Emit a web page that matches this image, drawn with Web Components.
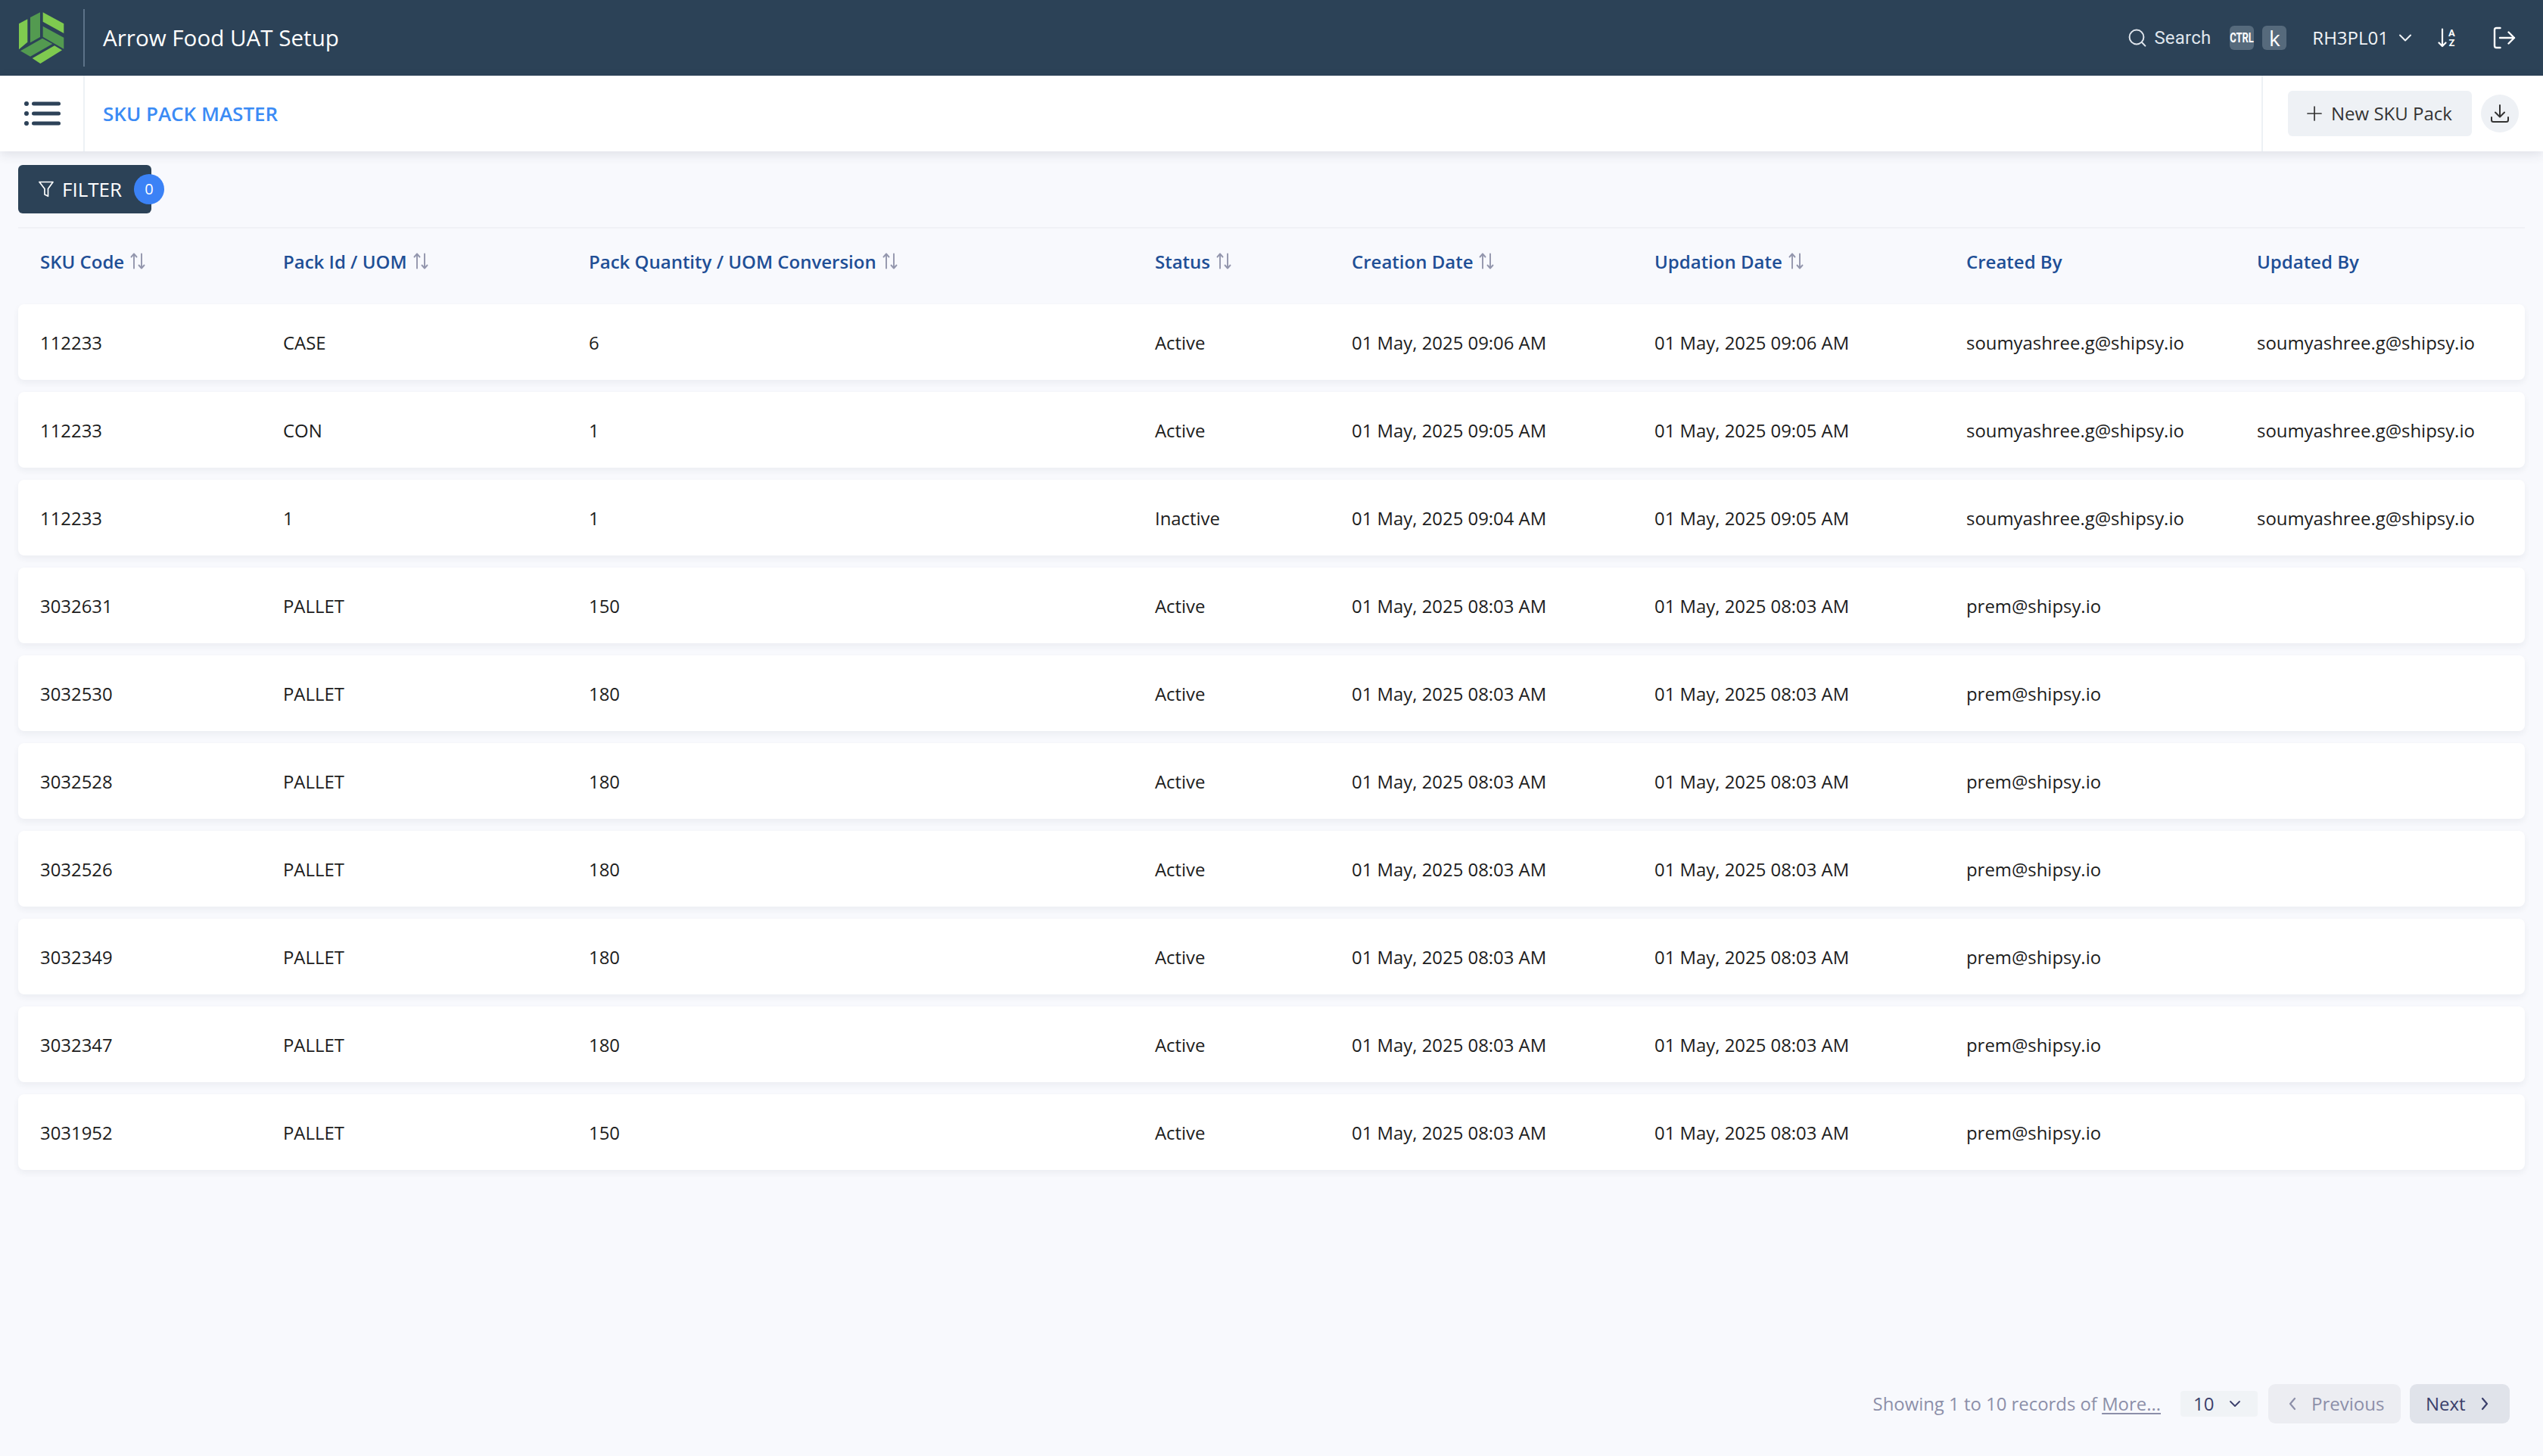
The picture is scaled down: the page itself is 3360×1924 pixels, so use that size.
<!DOCTYPE html>
<html lang="en">
<head>
<meta charset="utf-8">
<title>SKU Pack Master</title>
<style>
html,body{margin:0;padding:0;height:100%;background:#f8f9fd;}
body{font-family:"Open Sans","Noto Sans",sans-serif;}
sku-app{display:flex;flex-direction:column;height:1924px;}
</style>
</head>
<body>
<sku-app></sku-app>
<script>
const ICON = {
  search:'<svg width="24" height="24" viewBox="0 0 24 24" fill="none" stroke="#dfe5ec" stroke-width="2" stroke-linecap="round"><circle cx="11" cy="11" r="9.4"/><path d="M18 18l4.4 4.6"/></svg>',
  chev:'<svg width="18" height="12" viewBox="0 0 18 12" fill="none" stroke="currentColor" stroke-width="2" stroke-linecap="round" stroke-linejoin="round"><path d="M2 2.5l7 7 7-7"/></svg>',
  logout:'<svg width="30" height="30" viewBox="0 0 30 30" fill="none" stroke="#fff" stroke-width="2.4" stroke-linecap="round" stroke-linejoin="round"><path d="M9.5 2H4.5Q2 2 2 4.5v21Q2 28 4.5 28H9.5"/><path d="M9 15H28M20.5 7.5L28 15l-7.5 7.5"/></svg>',
  plus:'<svg width="20" height="20" viewBox="0 0 20 20" fill="none" stroke="#333" stroke-width="1.7" stroke-linecap="round"><path d="M10 1v18M1 10h18"/></svg>',
  download:'<svg width="24" height="26" viewBox="0 0 24 26" fill="none" stroke="#333" stroke-width="2" stroke-linecap="round" stroke-linejoin="round"><path d="M12 2v15M6 11.5l6 6 6-6"/><path d="M1 18v3.5Q1 24 3.5 24h17q2.5 0 2.5-2.5V18"/></svg>',
  filter:'<svg width="20" height="22" viewBox="0 0 20 22" fill="none" stroke="#fff" stroke-width="1.7" stroke-linejoin="round"><path d="M1 1.5h18L12.5 10.500v9.800L8 18V10.500Z"/></svg>',
  sort:'<svg width="20" height="22" viewBox="0 0 20 22" fill="none" stroke="#9396ad" stroke-width="1.900" stroke-linecap="round" stroke-linejoin="round"><path d="M5 20.500V1.500M1.500 5.500L5 1.500l3.500 4"/><path d="M15 1.500V20.500M11.500 16.500l3.500 4 3.500-4"/></svg>',
  menu:'<svg width="48" height="32" viewBox="0 0 48 32" fill="#2d4258"><circle cx="3" cy="3" r="3"/><circle cx="3" cy="16" r="3"/><circle cx="3" cy="29" r="3"/><rect x="10" y="0.500" width="38" height="5" rx="2.500"/><rect x="10" y="13.500" width="38" height="5" rx="2.500"/><rect x="10" y="26.500" width="38" height="5" rx="2.500"/></svg>',
  logo:'<svg width="80" height="84" viewBox="0 0 240 252"><g fill="#7fca4f"><path d="M27 70L61 52V143L27 172Z"/><path d="M122 25L205 70V108L122 62Z"/><path d="M80 207L168 157L198 175L112 228Z"/></g><g fill="#539a50"><path d="M72 45L111 25V123L72 145Z"/><path d="M122 80L205 125V170L122 122Z"/><path d="M33 178L120 128L160 150L72 200Z"/></g></svg>'
};

class AppHeader extends HTMLElement{
  constructor(){super();this.attachShadow({mode:'open'}).innerHTML=`<style>
  :host{display:flex;align-items:center;height:100px;background:#2c4257;color:#fff;flex:none;}
  .logo{display:flex;width:110px;padding-left:16px;box-sizing:border-box;flex:none;}
  .div{width:2px;height:76px;background:#5c7288;flex:none;}
  h1{font:400 29.6px/1 "Open Sans",sans-serif;margin:0 0 0 24px;flex:1;}
  .search{display:flex;align-items:center;gap:10px;font:400 24px/1 Roboto,sans-serif;color:#dfe5ec;letter-spacing:.2px;}
  .search svg{display:block;}
  .key{display:flex;align-items:center;justify-content:center;width:32px;height:32px;background:#566a7c;border-radius:6px;color:#fff;}
  .ctrl{font:700 18px/1 Roboto,sans-serif;transform:scaleX(.72);letter-spacing:0;white-space:nowrap;flex:none;}
  .k{font:400 28px/1 "Open Sans",sans-serif;}
  .keys{display:flex;gap:11px;margin-left:25px;}
  .user{display:flex;align-items:center;font:400 24px/1 "Open Sans",sans-serif;color:#f1f4f7;margin-left:34px;gap:13px;}
  .user svg{display:block;}
  .az{display:flex;align-items:center;margin-left:34px;height:26px;width:23px;}
  .az-l{display:flex;flex-direction:column;font:700 13px/13px Roboto,sans-serif;color:#fff;margin-left:2px;align-items:center;}
  .out{display:flex;margin-left:50px;margin-right:36px;}
  </style>
  <span class="logo">${ICON.logo}</span><span class="div"></span><h1>Arrow Food UAT Setup</h1>
  <span class="search">${ICON.search}<span>Search</span></span>
  <span class="keys"><span class="key"><span class="ctrl">CTRL</span></span><span class="key"><span class="k">k</span></span></span>
  <span class="user"><span>RH3PL01</span>${ICON.chev}</span>
  <span class="az"><svg width="12" height="26" viewBox="0 0 12 26" fill="none" stroke="#fff" stroke-width="2.200" stroke-linecap="round" stroke-linejoin="round"><path d="M6 1.500V24M1.500 19.500L6 24l4.500-4.500"/></svg><span class="az-l"><span>A</span><span>Z</span></span></span>
  <span class="out">${ICON.logout}</span>`;}
}
class SubHeader extends HTMLElement{
  constructor(){super();this.attachShadow({mode:'open'}).innerHTML=`<style>
  :host{display:flex;align-items:center;height:100px;background:#fff;flex:none;box-shadow:0 4px 14px rgba(40,50,70,.12);position:relative;z-index:1;}
  .menu{display:flex;align-items:center;width:112px;height:100%;padding-left:32px;box-sizing:border-box;flex:none;border-right:2px solid #edf1f5;}
  h2{font:600 26px/1 "Open Sans",sans-serif;color:#3b8bf5;margin:0 0 0 24px;flex:1;}
  .act{display:flex;align-items:center;height:100%;border-left:2px solid #edf1f5;padding-left:33px;gap:12px;margin-right:32px;}
  .new{display:flex;align-items:center;gap:12px;height:60px;width:243px;box-sizing:border-box;padding-left:25px;background:#eef1f5;border-radius:6px;color:#333;font:400 24px/1 "Open Sans",sans-serif;}
  .dl{display:flex;align-items:center;justify-content:center;width:50px;height:50px;border-radius:50%;background:#eef1f5;}
  svg{display:block}
  </style>
  <span class="menu">${ICON.menu}</span><h2>SKU PACK MASTER</h2>
  <span class="act"><span class="new">${ICON.plus}<span>New SKU Pack</span></span><span class="dl">${ICON.download}</span></span>`;}
}
class FilterBar extends HTMLElement{
  constructor(){super();this.attachShadow({mode:'open'}).innerHTML=`<style>
  :host{display:flex;flex:none;padding:18px 24px 18px;border-bottom:0;}
  .btn{position:relative;display:flex;align-items:center;gap:11px;width:176px;height:64px;box-sizing:border-box;padding-left:27px;background:#2c4257;border-radius:6px;color:#fff;font:400 26px/1 "Open Sans",sans-serif;}
  .badge{position:absolute;left:153px;top:12px;width:40px;height:40px;border-radius:50%;background:#3b82f6;display:flex;align-items:center;justify-content:center;font:400 20px/1 "Open Sans",sans-serif;}
  svg{display:block}
  </style><span class="btn">${ICON.filter}<span>FILTER</span><span class="badge">0</span></span>`;}
}
const COLS='321px 404px 748px 260px 400px 412px 384px 383px';
class SortHead extends HTMLElement{
  constructor(){super();this.attachShadow({mode:'open'}).innerHTML=`<style>
  :host{display:flex;align-items:center;gap:8px;padding-left:29px;font:600 24px/1 "Open Sans",sans-serif;color:#1f4f96;white-space:nowrap;}
  svg{display:block;margin-top:-2px}
  </style><slot></slot>${this.hasAttribute('sortable')?ICON.sort:''}`;}
}
class DataRow extends HTMLElement{
  constructor(){super();this.attachShadow({mode:'open'});}
  connectedCallback(){
    const c=JSON.parse(this.getAttribute('cells'));
    this.shadowRoot.innerHTML=`<style>
    :host{display:grid;grid-template-columns:${COLS};height:100px;background:#fff;border-radius:8px;box-shadow:0 4px 8px rgba(40,50,70,.06);}
    div{display:flex;align-items:center;padding:2px 0 0 29px;font:400 23.9px/1 "Open Sans",sans-serif;color:#1c1c1c;white-space:nowrap;}
    </style>`+c.map(t=>`<div>${t}</div>`).join('');
  }
}
class DataTable extends HTMLElement{
  constructor(){super();this.attachShadow({mode:'open'});
    const hd=[['SKU Code',1],['Pack Id / UOM',1],['Pack Quantity / UOM Conversion',1],['Status',1],['Creation Date',1],['Updation Date',1],['Created By',0],['Updated By',0]];
    const m='soumyashree.g@shipsy.io',p='prem@shipsy.io',d3='01 May, 2025 08:03 AM';
    const rows=[
     ['112233','CASE','6','Active','01 May, 2025 09:06 AM','01 May, 2025 09:06 AM',m,m],
     ['112233','CON','1','Active','01 May, 2025 09:05 AM','01 May, 2025 09:05 AM',m,m],
     ['112233','1','1','Inactive','01 May, 2025 09:04 AM','01 May, 2025 09:05 AM',m,m],
     ['3032631','PALLET','150','Active',d3,d3,p,''],
     ['3032530','PALLET','180','Active',d3,d3,p,''],
     ['3032528','PALLET','180','Active',d3,d3,p,''],
     ['3032526','PALLET','180','Active',d3,d3,p,''],
     ['3032349','PALLET','180','Active',d3,d3,p,''],
     ['3032347','PALLET','180','Active',d3,d3,p,''],
     ['3031952','PALLET','150','Active',d3,d3,p,'']];
    this.shadowRoot.innerHTML=`<style>
    :host{display:flex;flex-direction:column;margin:0 24px;flex:none;border-top:2px solid #f0f1f6;}
    .head{display:grid;grid-template-columns:${COLS};height:100px;align-items:center;margin-bottom:0;padding-bottom:13px;box-sizing:border-box;}
    .rows{display:flex;flex-direction:column;gap:16px;}
    </style>
    <div class="head">${hd.map(h=>`<sort-head ${h[1]?'sortable':''}>${h[0]}</sort-head>`).join('')}</div>
    <div class="rows">${rows.map(r=>`<data-row cells='${JSON.stringify(r)}'></data-row>`).join('')}</div>`;}
}
class PagerBar extends HTMLElement{
  constructor(){super();this.attachShadow({mode:'open'}).innerHTML=`<style>
  :host{display:flex;align-items:center;justify-content:flex-end;margin-top:auto;height:52px;margin-bottom:43px;padding-right:44px;flex:none;font:400 24px/1 "Open Sans",sans-serif;color:#8c8fa9;}
  u{text-underline-offset:3px}
  .txt{white-space:nowrap;margin-right:26px;font-size:23.9px;}
  .sel{display:flex;align-items:center;width:102px;height:34px;background:#f0f3f6;border-radius:4px;box-sizing:border-box;padding-left:17px;gap:20px;color:#3a3f6b;margin-right:14px;}
  .btn{display:flex;align-items:center;height:52px;border-radius:9px;white-space:nowrap;box-sizing:border-box;}
  .prev{width:175px;background:#ecedf2;color:#8c8fa9;margin-right:12px;padding-left:27px;gap:20px;}
  .next{width:132px;background:#e0e3ea;color:#3a3f6b;padding-left:21px;gap:20px;}
  svg{display:block}
  </style>
  <span class="txt">Showing 1 to 10 records of <u>More...</u></span>
  <span class="sel"><span>10</span><svg width="16" height="10" viewBox="0 0 16 10" fill="none" stroke="currentColor" stroke-width="1.800" stroke-linecap="round" stroke-linejoin="round"><path d="M2 2l6 6 6-6"/></svg></span>
  <span class="btn prev"><svg width="10" height="18" viewBox="0 0 10 18" fill="none" stroke="currentColor" stroke-width="2.200" stroke-linecap="round" stroke-linejoin="round"><path d="M8 2L2 9l6 7"/></svg><span>Previous</span></span>
  <span class="btn next"><span>Next</span><svg width="10" height="18" viewBox="0 0 10 18" fill="none" stroke="currentColor" stroke-width="2.200" stroke-linecap="round" stroke-linejoin="round"><path d="M2 2l6 7-6 7"/></svg></span>`;}
}
class SkuApp extends HTMLElement{
  connectedCallback(){
    this.attachShadow({mode:'open'}).innerHTML=`<style>:host{display:flex;flex-direction:column;height:1924px;background:#f8f9fd;overflow:hidden;}</style>
    <app-header></app-header><sub-header></sub-header><filter-bar></filter-bar><data-table></data-table><pager-bar></pager-bar>`;
  }
}
customElements.define('app-header',AppHeader);
customElements.define('sub-header',SubHeader);
customElements.define('filter-bar',FilterBar);
customElements.define('sort-head',SortHead);
customElements.define('data-row',DataRow);
customElements.define('data-table',DataTable);
customElements.define('pager-bar',PagerBar);
customElements.define('sku-app',SkuApp);
</script>
</body>
</html>
